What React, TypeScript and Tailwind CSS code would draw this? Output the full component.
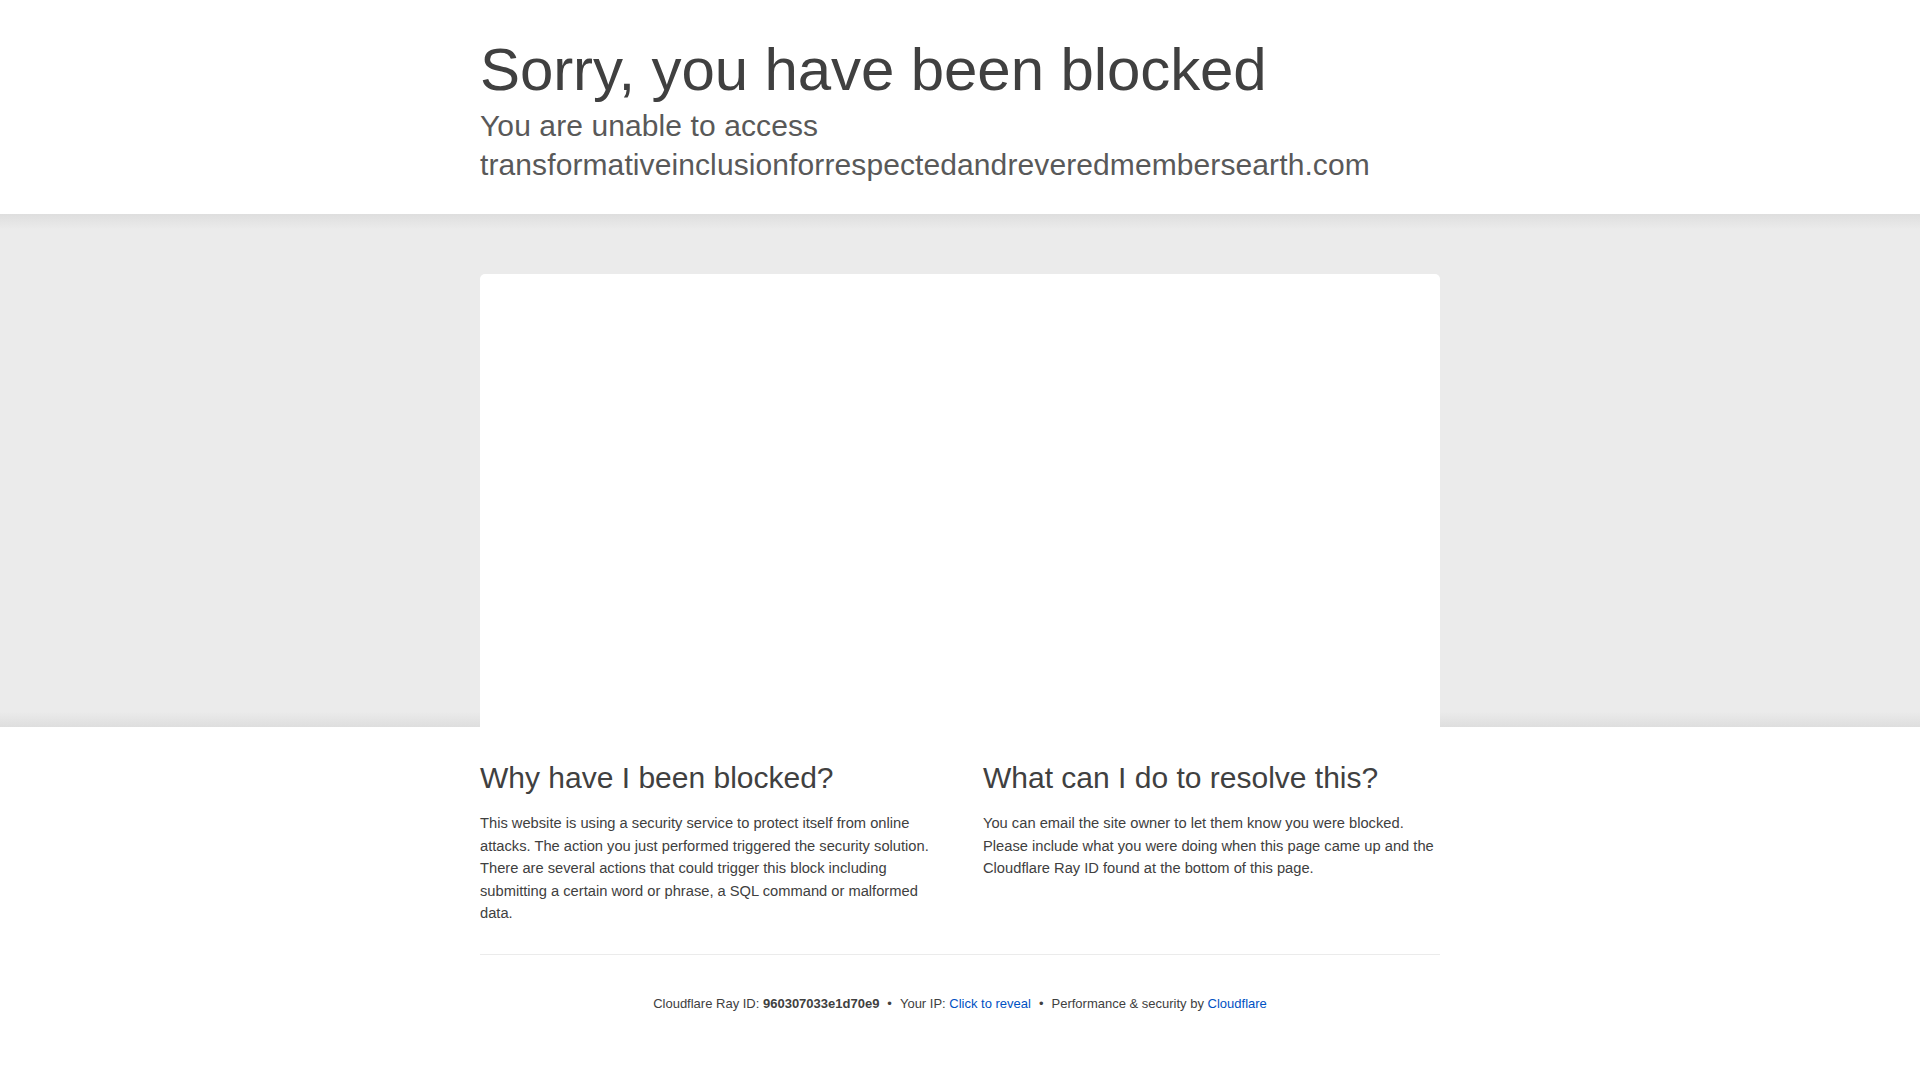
import React from 'react';

const Separator: React.FC = () => <span className="px-[8px]">&bull;</span>;

const App: React.FC = () => {
  return (
    <div className="min-h-screen bg-white text-[#404040] font-['Liberation_Sans',Arial,sans-serif]">
      {/* header */}
      <header className="w-[960px] mx-auto pt-[34px] pb-[30px]">
        <h1 className="text-[60px] leading-[72px] font-light tracking-[-0.1px]">Sorry, you have been blocked</h1>
        <h2 className="text-[30px] leading-[39px] font-light text-[#595959] tracking-[0.1px]">
          <span className="block">You are unable to access</span>
          <span className="block">transformativeinclusionforrespectedandreveredmembersearth.com</span>
        </h2>
      </header>

      {/* screenshot area */}
      <section className="pt-[60px] bg-[linear-gradient(#dedede,#ebebeb_3%,#ebebeb_97%,#dedede)]">
        <div className="w-[960px] h-[453px] mx-auto bg-white rounded-t-[5px]"></div>
      </section>

      {/* explanation */}
      <section className="w-[960px] mx-auto pt-[31px]">
        <div className="grid grid-cols-2 gap-[46px] pb-[29px] border-b border-[#ebebeb]">
          <div>
            <h2 className="text-[30px] leading-[39px] font-light mb-[15px]">Why have I been blocked?</h2>
            <p className="text-[14.7px] leading-[22.5px]">
              This website is using a security service to protect itself from online attacks. The action you just
              performed triggered the security solution. There are several actions that could trigger this block
              including submitting a certain word or phrase, a SQL command or malformed data.
            </p>
          </div>
          <div>
            <h2 className="text-[30px] leading-[39px] font-light mb-[15px]">What can I do to resolve this?</h2>
            <p className="text-[14.7px] leading-[22.5px]">
              You can email the site owner to let them know you were blocked. Please include what you were doing
              when this page came up and the Cloudflare Ray ID found at the bottom of this page.
            </p>
          </div>
        </div>

        <footer className="pt-[39px] pb-[40px] text-center text-[13px] leading-[20px]">
          <span>
            Cloudflare Ray ID: <strong className="font-semibold">960307033e1d70e9</strong>
          </span>
          <Separator />
          <span>
            Your IP: <button className="text-[#0051c3] cursor-pointer">Click to reveal</button>
          </span>
          <Separator />
          <span>
            Performance &amp; security by <a className="text-[#0051c3]" href="#">Cloudflare</a>
          </span>
        </footer>
      </section>
    </div>
  );
};

export default App;
